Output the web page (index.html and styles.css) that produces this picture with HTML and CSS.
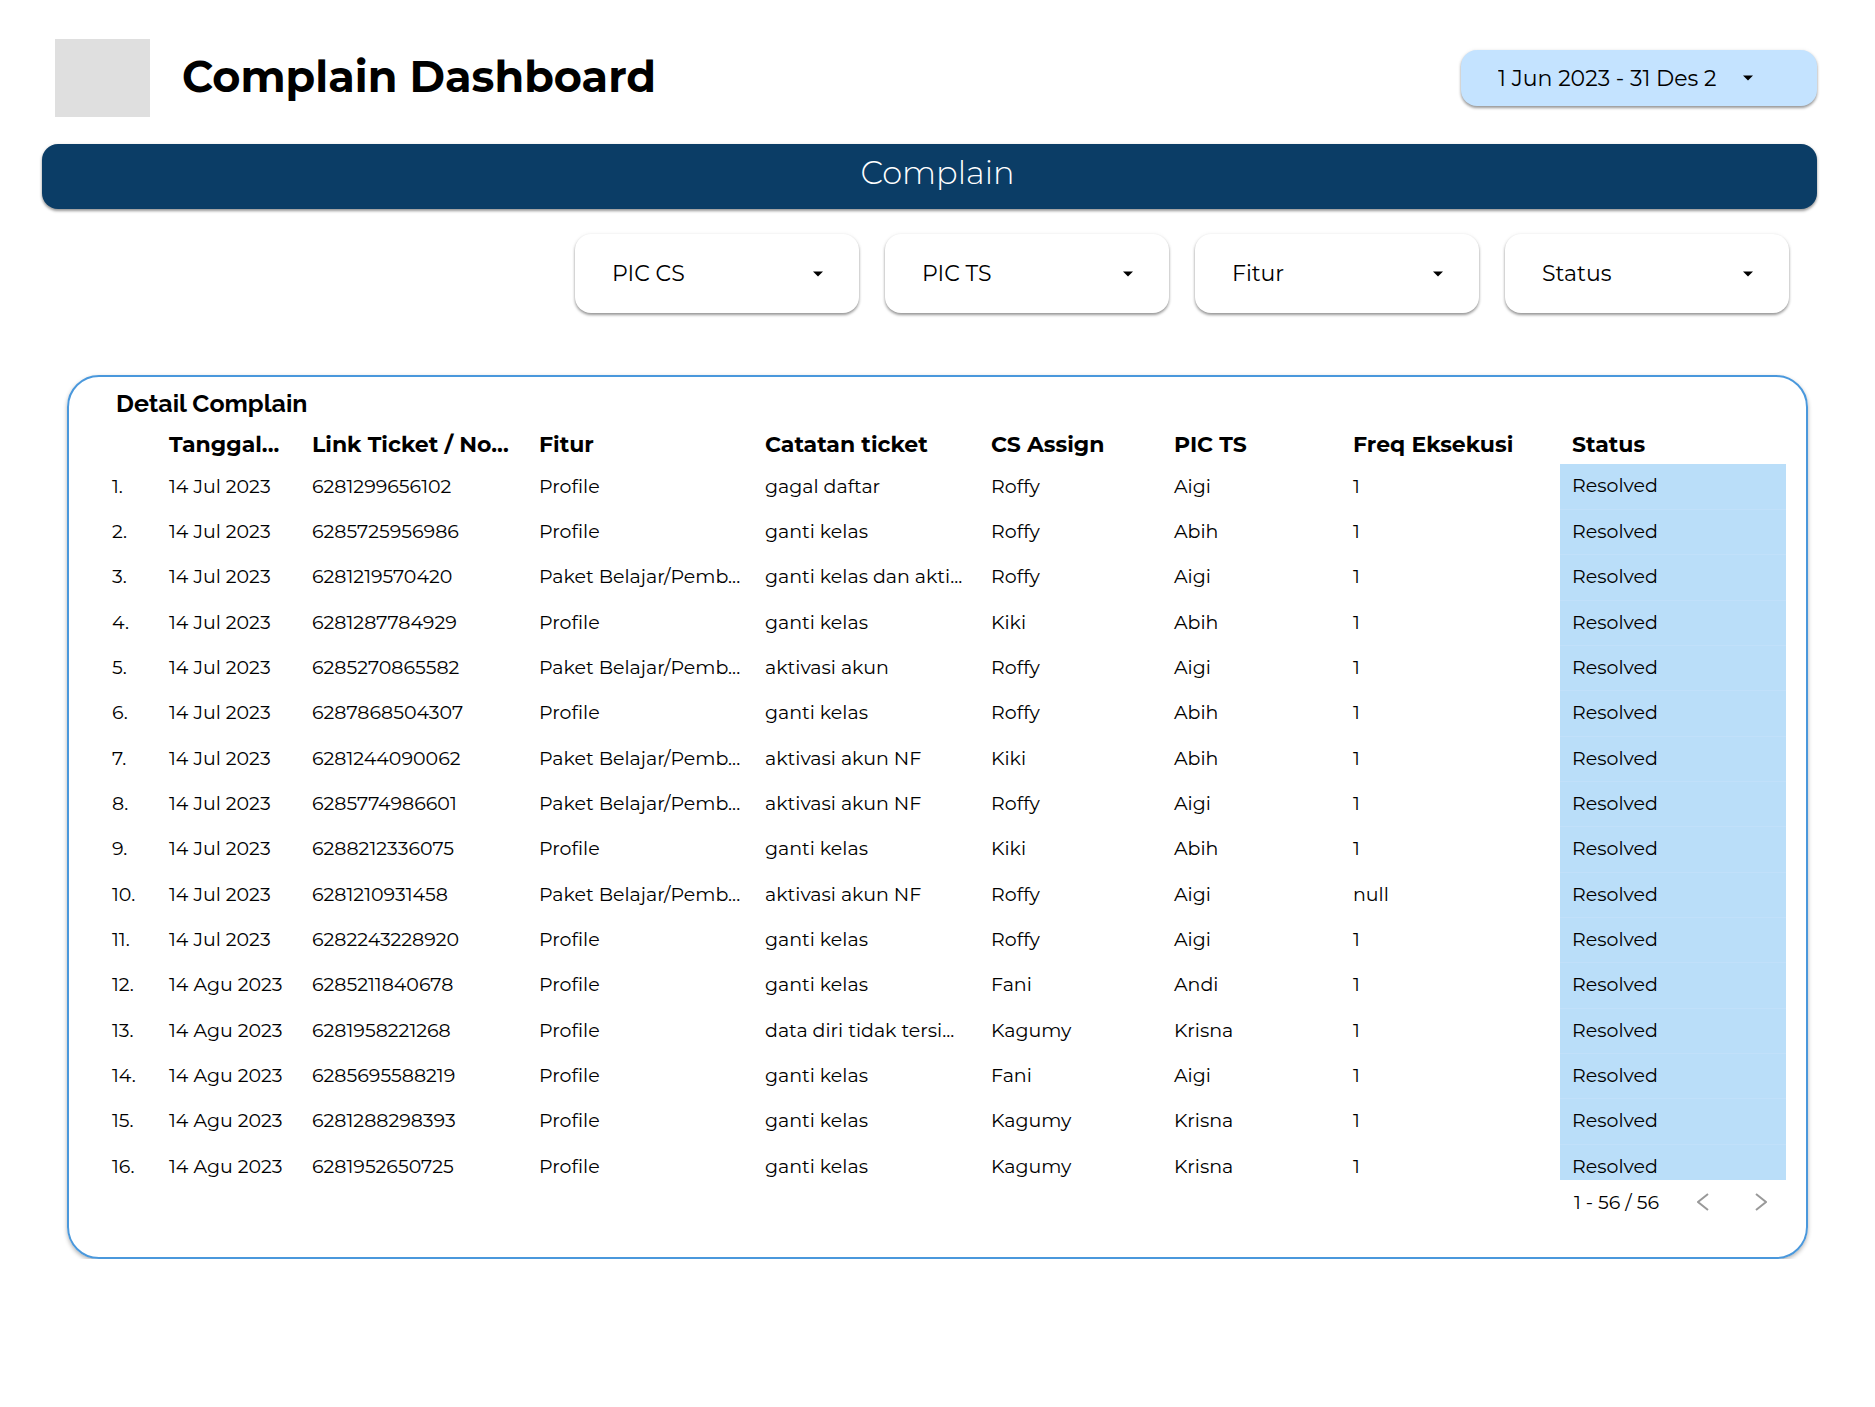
FILE: index.html
```html
<!DOCTYPE html>
<html lang="id">
<head>
<meta charset="utf-8">
<title>Complain Dashboard</title>
<link rel="stylesheet" href="styles.css">
</head>
<body>
<div class="page">
  <header class="header">
    <div class="logo"></div>
    <h1 class="title">Complain Dashboard</h1>
    <button class="date-range" type="button">
      <span class="date-text">1 Jun 2023 - 31 Des 2</span>
      <svg class="caret" viewBox="0 0 10 6" aria-hidden="true"><path d="M0 0.5h10L5 5.5z"/></svg>
    </button>
  </header>

  <h2 class="banner">Complain</h2>

  <div class="filters">
    <label class="filter">
      <select aria-label="PIC CS"><option>PIC CS</option></select>
      <svg class="caret" viewBox="0 0 10 6" aria-hidden="true"><path d="M0 0.5h10L5 5.5z"/></svg>
    </label>
    <label class="filter">
      <select aria-label="PIC TS"><option>PIC TS</option></select>
      <svg class="caret" viewBox="0 0 10 6" aria-hidden="true"><path d="M0 0.5h10L5 5.5z"/></svg>
    </label>
    <label class="filter">
      <select aria-label="Fitur"><option>Fitur</option></select>
      <svg class="caret" viewBox="0 0 10 6" aria-hidden="true"><path d="M0 0.5h10L5 5.5z"/></svg>
    </label>
    <label class="filter">
      <select aria-label="Status"><option>Status</option></select>
      <svg class="caret" viewBox="0 0 10 6" aria-hidden="true"><path d="M0 0.5h10L5 5.5z"/></svg>
    </label>
  </div>

  <section class="panel">
    <h3 class="panel-title">Detail Complain</h3>
    <div class="table-view">
      <table class="tickets">
        <colgroup>
          <col class="col-no"><col class="col-date"><col class="col-link"><col class="col-feature"><col class="col-note"><col class="col-cs"><col class="col-ts"><col class="col-freq"><col class="col-status">
        </colgroup>
        <thead>
          <tr><th></th><th>Tanggal...</th><th>Link Ticket / No...</th><th>Fitur</th><th>Catatan ticket</th><th>CS Assign</th><th>PIC TS</th><th>Freq Eksekusi</th><th>Status</th></tr>
        </thead>
        <tbody>
          <tr><td>1.</td><td>14 Jul 2023</td><td>6281299656102</td><td>Profile</td><td>gagal daftar</td><td>Roffy</td><td>Aigi</td><td>1</td><td class="status">Resolved</td></tr>
          <tr><td>2.</td><td>14 Jul 2023</td><td>6285725956986</td><td>Profile</td><td>ganti kelas</td><td>Roffy</td><td>Abih</td><td>1</td><td class="status">Resolved</td></tr>
          <tr><td>3.</td><td>14 Jul 2023</td><td>6281219570420</td><td>Paket Belajar/Pemb...</td><td>ganti kelas dan akti...</td><td>Roffy</td><td>Aigi</td><td>1</td><td class="status">Resolved</td></tr>
          <tr><td>4.</td><td>14 Jul 2023</td><td>6281287784929</td><td>Profile</td><td>ganti kelas</td><td>Kiki</td><td>Abih</td><td>1</td><td class="status">Resolved</td></tr>
          <tr><td>5.</td><td>14 Jul 2023</td><td>6285270865582</td><td>Paket Belajar/Pemb...</td><td>aktivasi akun</td><td>Roffy</td><td>Aigi</td><td>1</td><td class="status">Resolved</td></tr>
          <tr><td>6.</td><td>14 Jul 2023</td><td>6287868504307</td><td>Profile</td><td>ganti kelas</td><td>Roffy</td><td>Abih</td><td>1</td><td class="status">Resolved</td></tr>
          <tr><td>7.</td><td>14 Jul 2023</td><td>6281244090062</td><td>Paket Belajar/Pemb...</td><td>aktivasi akun NF</td><td>Kiki</td><td>Abih</td><td>1</td><td class="status">Resolved</td></tr>
          <tr><td>8.</td><td>14 Jul 2023</td><td>6285774986601</td><td>Paket Belajar/Pemb...</td><td>aktivasi akun NF</td><td>Roffy</td><td>Aigi</td><td>1</td><td class="status">Resolved</td></tr>
          <tr><td>9.</td><td>14 Jul 2023</td><td>6288212336075</td><td>Profile</td><td>ganti kelas</td><td>Kiki</td><td>Abih</td><td>1</td><td class="status">Resolved</td></tr>
          <tr><td>10.</td><td>14 Jul 2023</td><td>6281210931458</td><td>Paket Belajar/Pemb...</td><td>aktivasi akun NF</td><td>Roffy</td><td>Aigi</td><td>null</td><td class="status">Resolved</td></tr>
          <tr><td>11.</td><td>14 Jul 2023</td><td>6282243228920</td><td>Profile</td><td>ganti kelas</td><td>Roffy</td><td>Aigi</td><td>1</td><td class="status">Resolved</td></tr>
          <tr><td>12.</td><td>14 Agu 2023</td><td>6285211840678</td><td>Profile</td><td>ganti kelas</td><td>Fani</td><td>Andi</td><td>1</td><td class="status">Resolved</td></tr>
          <tr><td>13.</td><td>14 Agu 2023</td><td>6281958221268</td><td>Profile</td><td>data diri tidak tersi...</td><td>Kagumy</td><td>Krisna</td><td>1</td><td class="status">Resolved</td></tr>
          <tr><td>14.</td><td>14 Agu 2023</td><td>6285695588219</td><td>Profile</td><td>ganti kelas</td><td>Fani</td><td>Aigi</td><td>1</td><td class="status">Resolved</td></tr>
          <tr><td>15.</td><td>14 Agu 2023</td><td>6281288298393</td><td>Profile</td><td>ganti kelas</td><td>Kagumy</td><td>Krisna</td><td>1</td><td class="status">Resolved</td></tr>
          <tr><td>16.</td><td>14 Agu 2023</td><td>6281952650725</td><td>Profile</td><td>ganti kelas</td><td>Kagumy</td><td>Krisna</td><td>1</td><td class="status">Resolved</td></tr>
        </tbody>
      </table>
    </div>
    <nav class="pager" aria-label="Halaman">
      <span>1 - 56 / 56</span>
      <span class="pager-buttons">
        <button class="pager-button" type="button" aria-label="Sebelumnya"><svg viewBox="0 0 12 18"><path d="M11 1L1 9l10 8"/></svg></button>
        <button class="pager-button" type="button" aria-label="Berikutnya"><svg viewBox="0 0 12 18"><path d="M1 1l10 8-10 8"/></svg></button>
      </span>
    </nav>
  </section>
</div>
</body>
</html>
```
FILE: styles.css
```css
* {
  box-sizing: border-box;
}

body {
  margin: 0;
  background: #fff;
  color: #000;
  font-family: Montserrat, Inter, "Liberation Sans", sans-serif;
  font-size: 19px;
}

h1, h2, h3 {
  margin: 0;
}

button, select {
  border: 0;
  background: none;
  color: inherit;
  font: inherit;
}

.page {
  padding: 39px 58px 0 42px;
}

.header {
  display: flex;
  align-items: center;
  padding-left: 13px;
}

.logo {
  width: 95px;
  height: 78px;
  background: #dfdfdf;
}

.title {
  flex: 1;
  margin-left: 32px;
  padding-bottom: 2px;
  font-size: 43px;
  font-weight: 700;
  line-height: 56px;
}

.date-range,
.banner,
.filter {
  border-radius: 16px;
  box-shadow: 0 2px 3px rgba(0, 0, 0, 0.4), 0 0 4px rgba(0, 0, 0, 0.06);
}

.date-range {
  display: flex;
  align-items: center;
  justify-content: space-between;
  width: 356px;
  height: 56px;
  padding: 0 64px 0 37px;
  background: #c4e3ff;
  font-size: 22px;
}

.date-text {
  overflow: hidden;
  white-space: nowrap;
}

.caret {
  width: 10px;
  height: 6px;
}

.banner {
  height: 65px;
  margin-top: 27px;
  padding-left: 16px;
  background: #0b3d66;
  color: #fff;
  font-size: 32px;
  font-weight: 300;
  line-height: 58px;
  text-align: center;
}

.filters {
  display: flex;
  justify-content: flex-end;
  gap: 26px;
  margin-top: 25px;
  padding-right: 28px;
}

.filter {
  display: grid;
  align-items: center;
  width: 284px;
  height: 79px;
  background: #fff;
  font-size: 22px;
}

.filter select,
.filter .caret {
  grid-area: 1 / 1;
}

.filter select {
  width: 100%;
  height: 100%;
  padding: 0 56px 0 37px;
  appearance: none;
}

.filter .caret {
  justify-self: end;
  margin-right: 36px;
  pointer-events: none;
}

.panel {
  margin: 62px 9px 0 25px;
  padding: 10px 20px 35px 31px;
  border: 2px solid #4a98dc;
  border-radius: 32px;
  box-shadow: 0 2px 4px rgba(0, 0, 0, 0.3);
}

.panel-title {
  padding-left: 16px;
  font-family: Raleway, Lato, sans-serif;
  font-size: 25px;
  font-weight: 700;
  line-height: 32px;
}

.table-view {
  max-height: 761px;
  overflow: hidden;
}

.tickets {
  width: 100%;
  height: 771px;
  border-collapse: collapse;
  table-layout: fixed;
}

.tickets th,
.tickets td {
  padding: 0 12px;
  overflow: hidden;
  text-align: left;
  white-space: nowrap;
}

.tickets th {
  height: 45px;
  padding-top: 6px;
  font-size: 22px;
  font-weight: 700;
}

.tickets td {
  height: 45px;
  padding-bottom: 1px;
}

.tickets .status {
  border-bottom: 1px solid #c1e0fa;
  background: #badef9;
}

.col-no { width: 57px; }
.col-date { width: 143px; }
.col-link { width: 227px; }
.col-feature { width: 226px; }
.col-note { width: 226px; }
.col-cs { width: 183px; }
.col-ts { width: 179px; }
.col-freq { width: 219px; }
.col-status { width: 226px; }

.pager {
  display: flex;
  align-items: center;
  justify-content: flex-end;
  gap: 28px;
  height: 40px;
  margin-top: 2px;
}

.pager-buttons {
  display: flex;
  gap: 26px;
  padding-right: 9px;
}

.pager-button {
  display: grid;
  place-items: center;
  width: 32px;
  height: 32px;
  padding: 0;
}

.pager-button svg {
  width: 12px;
  height: 18px;
  fill: none;
  stroke: #999;
  stroke-width: 2;
}
```
